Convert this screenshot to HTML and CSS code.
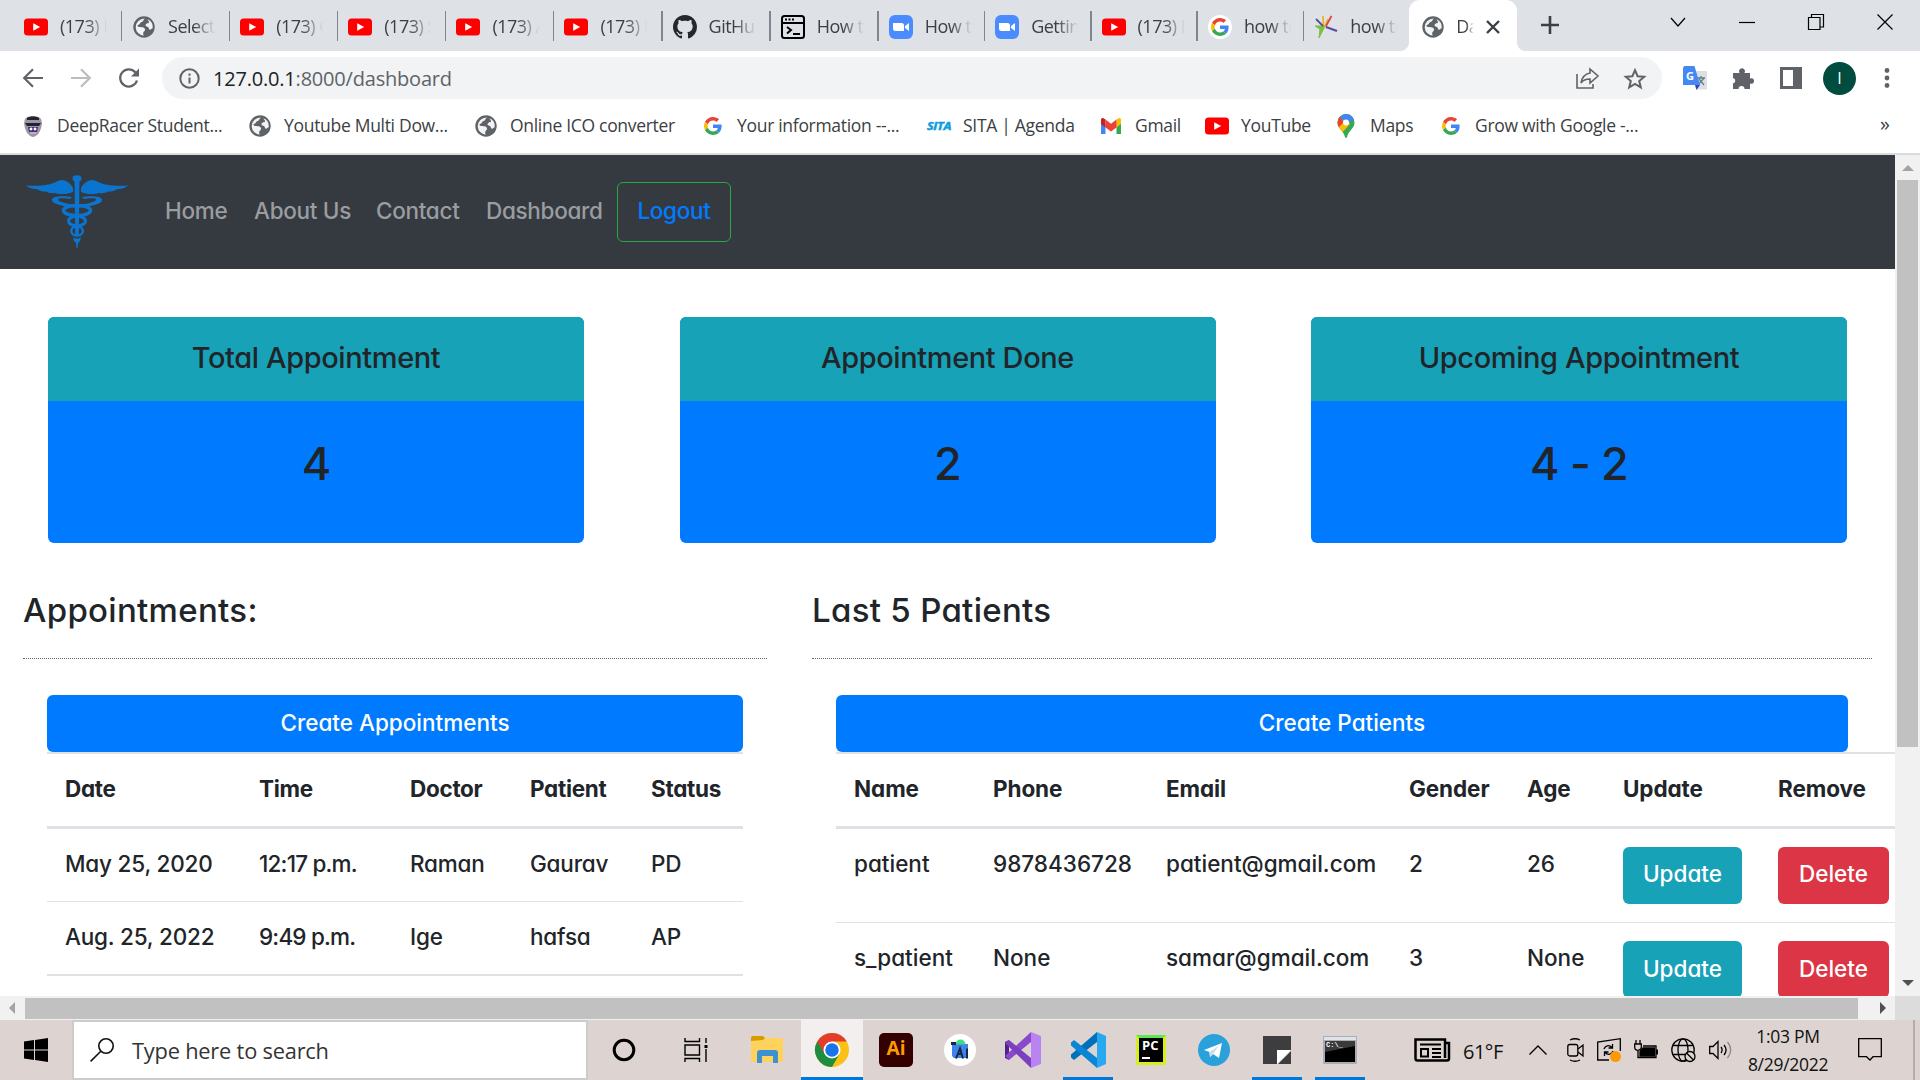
FILE: index.html
```html
<!DOCTYPE html>
<html lang="en">
<head>
<meta charset="utf-8">
<title>Dashboard</title>
<link rel="stylesheet" href="styles.css">
</head>
<body>
<svg class="defs" aria-hidden="true">
  <symbol id="yt" viewBox="0 0 24 24"><rect y="3.6" width="24" height="16.8" rx="3.5" fill="#f00"/><path d="M9.2 8.2v7.6l7-3.8z" fill="#fff"/></symbol>
  <symbol id="globe" viewBox="0 0 24 24"><circle cx="12" cy="12" r="10.7" fill="#5f6368"/><path d="M12.8 3.6c-2 1.6-1.2 3-3.2 3.4-1.8.4-1.4 2.3-2.6 2.6-1.8.3-2 1.8-.7 2.1 2.7.5 6.3.2 6.700 2.500.4 2-1.700 2-1.800 3.900-.1 1 .2 1.900.4 2.600a8.700 8.700 0 0 1-7.900-8.200 8.800 8.800 0 0 1 9.100-8.900zM15.500 4.300a8.700 8.700 0 0 1 5.200 8.900c-1.100-.1-1.500 1.700-2.700 1.600-1.400-.1-.9-2.800-2.700-3-1.700-.2-2.400-1.500-1.200-2.700 1.200-1.100 2.700-.3 2.900-1.900.1-1.400-1.400-1.600-1.500-2.900z" fill="#f1f3f4"/></symbol>
  <symbol id="g" viewBox="0 0 48 48"><path fill="#EA4335" d="M24 9.500c3.540 0 6.710 1.220 9.210 3.600l6.850-6.850C35.900 2.380 30.470 0 24 0 14.620 0 6.510 5.380 2.560 13.220l7.980 6.190C12.430 13.720 17.740 9.500 24 9.500z"/><path fill="#4285F4" d="M46.980 24.550c0-1.570-.15-3.090-.38-4.550H24v9.020h12.940c-.58 2.960-2.260 5.480-4.780 7.180l7.730 6c4.510-4.180 7.090-10.360 7.090-17.650z"/><path fill="#FBBC05" d="M10.530 28.590c-.48-1.450-.76-2.990-.76-4.590s.27-3.140.76-4.590l-7.980-6.190C.92 16.460 0 20.120 0 24c0 3.880.92 7.540 2.560 10.780l7.970-6.190z"/><path fill="#34A853" d="M24 48c6.480 0 11.930-2.130 15.890-5.810l-7.730-6c-2.150 1.450-4.920 2.300-8.160 2.300-6.260 0-11.570-4.220-13.470-9.910l-7.980 6.190C6.510 42.620 14.620 48 24 48z"/></symbol>
  <symbol id="zoomus" viewBox="0 0 24 24"><rect width="24" height="24" rx="6" fill="#4a8cff"/><path d="M4 8h8.500a2.500 2.500 0 0 1 2.500 2.500V16H6.500A2.500 2.500 0 0 1 4 13.500zM16 11l4-3v8l-4-3z" fill="#fff"/></symbol>
</svg>

<div class="tabs">
  <div class="tab"><svg><use href="#yt"/></svg><span>(173) H</span></div>
  <div class="tab"><svg><use href="#globe"/></svg><span>Select</span></div>
  <div class="tab"><svg><use href="#yt"/></svg><span>(173) C</span></div>
  <div class="tab"><svg><use href="#yt"/></svg><span>(173) S</span></div>
  <div class="tab"><svg><use href="#yt"/></svg><span>(173) A</span></div>
  <div class="tab"><svg><use href="#yt"/></svg><span>(173) I</span></div>
  <div class="tab"><svg viewBox="0 0 16 16"><path fill="#24292f" d="M8 0C3.580 0 0 3.580 0 8c0 3.540 2.290 6.530 5.470 7.590.4.070.55-.17.55-.38 0-.19-.01-.82-.01-1.490-2.010.37-2.530-.49-2.690-.94-.09-.23-.48-.94-.82-1.130-.28-.15-.68-.52-.01-.53.63-.01 1.080.58 1.230.82.72 1.210 1.870.87 2.330.66.070-.52.28-.87.51-1.070-1.780-.2-3.640-.89-3.640-3.950 0-.87.31-1.590.82-2.150-.08-.2-.36-1.020.08-2.120 0 0 .67-.21 2.200.82.64-.18 1.320-.27 2-.27s1.360.09 2 .27c1.530-1.040 2.200-.82 2.200-.82.44 1.100.16 1.920.08 2.120.51.56.82 1.270.82 2.150 0 3.070-1.870 3.750-3.650 3.950.29.25.54.73.54 1.480 0 1.070-.01 1.930-.01 2.200 0 .21.15.46.55.38A8.010 8.010 0 0 0 16 8c0-4.420-3.580-8-8-8z"/></svg><span>GitHub</span></div>
  <div class="tab"><svg viewBox="0 0 24 24" fill="none" stroke="#000" stroke-width="2"><rect x="1" y="1" width="22" height="22" rx="2.500"/><path d="M1 8h22M6 12l4 3-4 3.500M12 19h7"/><path d="M4 4.600h10" stroke-dasharray="2 1.500"/></svg><span>How t</span></div>
  <div class="tab"><svg><use href="#zoomus"/></svg><span>How t</span></div>
  <div class="tab"><svg><use href="#zoomus"/></svg><span>Getting</span></div>
  <div class="tab"><svg><use href="#yt"/></svg><span>(173) H</span></div>
  <div class="tab"><svg viewBox="0 0 24 24"><circle cx="12" cy="12" r="12" fill="#fff"/><use href="#g" x="3" y="3" width="18" height="18"/></svg><span>how to</span></div>
  <div class="tab last"><svg viewBox="0 0 24 24" fill="none" stroke-width="1.800"><path d="M11 12l3-8" stroke="#e9b52c"/><path d="M9.500 11L9 1" stroke="#e9b52c"/><path d="M12 11l5.500-10" stroke="#e5423c"/><path d="M1 11l10 0-6 12 1-9z" fill="#7ac143" stroke="#7ac143" stroke-width="1"/><path d="M12 12l11 4" stroke="#5c4a9c" stroke-width="2.200"/><path d="M2 4l7 7" stroke="#5c4a9c"/></svg><span>how to</span></div>
  <div class="tab active"><svg><use href="#globe"/></svg><span>Dash</span><svg class="close" viewBox="0 0 14 14"><path d="M1 1l12 12M13 1L1 13" stroke="#3c4043" stroke-width="2.400"/></svg></div>
  <svg class="plus" viewBox="0 0 18 18"><path d="M9 0v18M0 9h18" stroke="#3c4043" stroke-width="2.600"/></svg>
  <div class="wincontrols">
    <svg width="16" height="10" viewBox="0 0 16 10"><path d="M1 1l7 8 7-8"/></svg>
    <svg width="16" height="16" viewBox="0 0 16 16"><path d="M0 8.500h16"/></svg>
    <svg width="16" height="16" viewBox="0 0 16 16"><path d="M.5 3.500h11.500v12H.5zM3.500 3V.5h12V13H12"/></svg>
    <svg width="16" height="16" viewBox="0 0 16 16"><path d="M.5.5l15 15M15.500.5l-15 15"/></svg>
  </div>
</div>

<div class="toolbar">
  <div class="navbtns">
    <svg viewBox="0 0 20 20"><path d="M20 10H1.500M10 1.200L1.200 10l8.800 8.800" stroke="#5f6368"/></svg>
    <svg viewBox="0 0 20 20"><path d="M0 10h18.500M10 1.200l8.800 8.800-8.800 8.800" stroke="#bbbdc0"/></svg>
    <svg viewBox="0 0 20 20"><path d="M18 12.500A8.600 8.600 0 1 1 16.500 4.500" stroke="#5f6368"/><path d="M20 .5v8h-8z" fill="#5f6368"/></svg>
  </div>
  <div class="omnibox">
    <svg width="21" height="21" viewBox="0 0 21 21" fill="none" stroke="#5f6368" stroke-width="2"><circle cx="10.500" cy="10.500" r="9.200"/><path d="M10.500 9.500v6M10.500 5.500v2.200"/></svg>
    <span class="url">127.0.0.1<em>:8000/dashboard</em></span>
    <svg class="share" viewBox="0 0 23 21" fill="none" stroke="#5f6368" stroke-width="1.600"><path d="M1 6v14h16v-4M14 1l8 7-8 7v-4c-4 0-7 1-9 4 1-6 4-9 9-10z"/></svg>
    <svg class="star" viewBox="0 0 22 21" fill="none" stroke="#5f6368" stroke-width="2"><path d="M11 2.200l2.600 6 6.600.5-5 4.300 1.600 6.300-5.800-3.500-5.800 3.500 1.600-6.300-5-4.300 6.600-.5z"/></svg>
  </div>
  <div class="exts">
    <svg class="e1" viewBox="0 0 24 24"><path d="M9 5h15v18.500H13z" fill="#dcdfe3"/><path d="M14 12h8M18 10v2M15 19l6-7M16 13l5 6" stroke="#607d8b" stroke-width="1.300" fill="none"/><path d="M1.500 0h10L17 19H0V1.500z" fill="#4688f1"/><path d="M12 19h5l-3.500 5z" fill="#3442b0"/><text x="3" y="14" class="gt">G</text></svg>
    <svg class="e2" viewBox="0 0 21 21"><path d="M0 5h6.500a3 3 0 1 1 5 0H17v5.500a2.800 2.800 0 1 1 0 5V21h-5.500a3 3 0 0 0-6 0H0v-5.500a2.800 2.800 0 0 0 0-5.500z" fill="#5f6368"/></svg>
    <svg class="e3" viewBox="0 0 22 22"><path d="M0 0h22v22H0zM3 3v16h10V3z" fill="#5f6368" fill-rule="evenodd"/></svg>
    <span class="avatar">I</span>
    <svg class="e4" viewBox="0 0 6 20"><g fill="#5f6368"><circle cx="3" cy="2.500" r="2.400"/><circle cx="3" cy="10" r="2.400"/><circle cx="3" cy="17.500" r="2.400"/></g></svg>
  </div>
</div>

<div class="bookmarks">
  <div><svg viewBox="0 0 24 24"><path d="M4 5c2-4 14-4 16 0l1 4c-1 8-4 13-9 14C7 22 4 17 3 9z" fill="#9a96a5"/><path d="M6 4c3-2 9-2 12 0v2H6zM4 9h16l-2 3H6z" fill="#25222c"/><path d="M7 13h10l-1 5H8z" fill="#4b2a86"/><path d="M9 14h2v2H9zM13 14h2v2h-2zM9 19h6" fill="#fff" stroke="#fff" stroke-width=".6"/></svg><span>DeepRacer Student...</span></div>
  <div><svg><use href="#globe"/></svg><span>Youtube Multi Dow...</span></div>
  <div><svg><use href="#globe"/></svg><span>Online ICO converter</span></div>
  <div><svg><use href="#g" x="3" y="3" width="18" height="18"/></svg><span>Your information --...</span></div>
  <div><svg viewBox="0 0 24 24"><text x="0" y="16" class="sita" textLength="24" lengthAdjust="spacingAndGlyphs">SITA</text></svg><span>SITA | Agenda</span></div>
  <div><svg viewBox="0 0 24 24"><path d="M2 6v14h4.500V10z" fill="#4285f4"/><path d="M22 6v14h-4.500V10z" fill="#34a853"/><path d="M17.500 5.500l2-1.300C21 3.500 22 4.500 22 6v4l-4.500 3.500z" fill="#fbbc04"/><path d="M6.500 5.500l-2-1.300C3 3.500 2 4.500 2 6v4l4.500 3.500z" fill="#c5221f"/><path d="M6.500 5.500L12 9.700l5.500-4.200v8L12 17.500l-5.500-4z" fill="#ea4335"/></svg><span>Gmail</span></div>
  <div><svg><use href="#yt"/></svg><span>YouTube</span></div>
  <div><svg viewBox="0 0 24 24"><clipPath id="pin"><path d="M12 0a8.500 8.500 0 0 1 8.500 8.500c0 6-6 8-7.500 14.500-.3 1.300-1.700 1.300-2 0C9.500 16.500 3.500 14.500 3.500 8.500A8.500 8.500 0 0 1 12 0z"/></clipPath><g clip-path="url(#pin)"><path d="M0 0h24v24H0z" fill="#34a853"/><path d="M0 14L12 2l4 8-9 10H0z" fill="#fbbc04"/><path d="M0 0l6 3 4 5-6 6H0z" fill="#ea4335"/><path d="M6 3l4-3h10l1 5-8 5z" fill="#4285f4"/></g><circle cx="12" cy="8.500" r="3" fill="#fff"/></svg><span>Maps</span></div>
  <div><svg><use href="#g" x="3" y="3" width="18" height="18"/></svg><span>Grow with Google -...</span></div>
  <div class="more">»</div>
</div>

<div class="viewport">
  <div class="page">
    <nav class="navbar">
      <svg class="logo" viewBox="0 0 102 74" fill="#0a74cf"><ellipse cx="51" cy="3.500" rx="4.500" ry="3.300"/><path d="M48.500 4h5l-.7 57h-3.600z"/><path d="M47 13C43 6 37 3.500 32 6 23 11 12 11 0 10.500c3 3 8 3.500 12 4 1 1.500 4 2 8 2 2 1.500 5 2 9 1.500 5 2 14 1 18-1zM55 13C59 6 65 3.500 70 6c9 5 20 5 32 4.500-3 3-8 3.500-12 4-1 1.500-4 2-8 2-2 1.500-5 2-9 1.500-5 2-14 1-18-1z"/><path d="M46 22c-6-1-20-2-20 3 0 4 10 6 25 8v-3c-10-1-19-3-19-5.500 0-2 9-1 12-.5zM56 22c6-1 20-2 20 3 0 4-10 6-25 8v-3c10-1 19-3 19-5.500 0-2-9-1-12-.5z"/><g fill="none" stroke="#0a74cf"><ellipse cx="51" cy="35.500" rx="13.500" ry="5" stroke-width="3.500"/><ellipse cx="51" cy="46" rx="8.500" ry="4.700" stroke-width="3"/><ellipse cx="51" cy="56" rx="5.800" ry="4.500" stroke-width="2.500"/></g><path d="M47 62c2 2 6 2 8 0l-1 4-2 2-.5 5h-1l-.5-5-2-2z"/></svg>
      <a>Home</a><a>About Us</a><a>Contact</a><a>Dashboard</a><button>Logout</button>
    </nav>
    <section class="cards">
      <div class="card"><h4>Total Appointment</h4><p>4</p></div>
      <div class="card"><h4>Appointment Done</h4><p>2</p></div>
      <div class="card"><h4>Upcoming Appointment</h4><p>4 - 2</p></div>
    </section>
    <section class="lists">
      <div class="col">
        <h3>Appointments:</h3>
        <div class="panel">
          <a class="create">Create Appointments</a>
          <div class="table appts">
            <div class="row head"><span>Date</span><span>Time</span><span>Doctor</span><span>Patient</span><span>Status</span></div>
            <div class="row"><span>May 25, 2020</span><span class="time">12:17 p.m.</span><span>Raman</span><span>Gaurav</span><span>PD</span></div>
            <div class="row"><span>Aug. 25, 2022</span><span class="time">9:49 p.m.</span><span>Ige</span><span>hafsa</span><span>AP</span></div>
          </div>
        </div>
      </div>
      <div class="col">
        <h3>Last 5 Patients</h3>
        <div class="panel">
          <a class="create">Create Patients</a>
          <div class="table patients">
            <div class="row head"><span>Name</span><span>Phone</span><span>Email</span><span>Gender</span><span>Age</span><span>Update</span><span>Remove</span></div>
            <div class="row"><span>patient</span><span>9878436728</span><span>patient@gmail.com</span><span>2</span><span>26</span><a class="btn update">Update</a><a class="btn delete">Delete</a></div>
            <div class="row"><span>s_patient</span><span>None</span><span>samar@gmail.com</span><span>3</span><span>None</span><a class="btn update">Update</a><a class="btn delete">Delete</a></div>
          </div>
        </div>
      </div>
    </section>
  </div>
  <div class="vbar"><i class="up"></i><b></b><i class="down"></i></div>
  <div class="hbar"><i class="left"></i><b></b><i class="right"></i></div>
  <div class="corner"></div>
</div>

<div class="taskbar">
  <div class="start"><svg width="24" height="24" viewBox="0 0 24 24"><path d="M0 3.400l10-1.300v9.400H0zM11 2l13-2v11.500H11zM0 12.500h10v9.400L0 20.600zM11 12.500h13V24l-13-2z"/></svg></div>
  <div class="search"><svg width="24" height="24" viewBox="0 0 24 24" fill="none" stroke="#111" stroke-width="1.600"><circle cx="16" cy="8" r="7.200"/><path d="M10.800 13.200L.6 23.400"/></svg><span>Type here to search</span></div>
  <div class="app cortana"><svg width="24" height="24" viewBox="0 0 24 24"><circle cx="12" cy="12" r="9.800" fill="none" stroke="#000" stroke-width="3"/></svg></div>
  <div class="app tview"><svg width="24" height="24" viewBox="0 0 24 24" fill="none" stroke="#000" stroke-width="1.400"><path d="M1 0v3.500h14.500V0M1 24v-3.500h14.500V24M1 7h14.500v10H1zM22 0v5M22 11v13"/><path d="M20.500 7h3v3h-3z" fill="#000" stroke="none"/></svg></div>
  <div class="app files"><svg width="32" height="28" viewBox="0 0 32 28"><path d="M0 2a2 2 0 0 1 2-2h10l3 3-3 2H0z" fill="#d99a00"/><path d="M0 5l12-1 2-2h16a2 2 0 0 1 2 2v20a2 2 0 0 1-2 2H2a2 2 0 0 1-2-2z" fill="#ffd25e"/><path d="M6 27V17a3 3 0 0 1 3-3h15a3 3 0 0 1 3 3v10h-5v-7H11v7z" fill="#3c91d1"/></svg></div>
  <div class="app chrome on"><svg width="34" height="34" viewBox="0 0 48 48"><circle cx="24" cy="24" r="24" fill="#fbc116"/><path d="M24 24L3.200 12A24 24 0 0 0 24 48l10.400-18z" fill="#1e8e3e"/><path d="M3.200 12a24 24 0 0 1 41.600 0H24v12L14 30z" fill="#e33b2e"/><circle cx="24" cy="24" r="12" fill="#fff"/><circle cx="24" cy="24" r="9.500" fill="#1a73e8"/></svg></div>
  <div class="app ai"><span>Ai</span></div>
  <div class="app studio"><svg width="32" height="32" viewBox="0 0 32 32"><circle cx="16" cy="16" r="16" fill="#fff"/><path d="M8 10h16v14H10l-2-2z" fill="#3f82f0"/><path d="M11.500 10.500a5 5 0 0 1 10 0z" fill="#3ddc84"/><path d="M12 24.500l4-10 3 10M14 20h4M23 14.500v10" fill="none" stroke="#132a40" stroke-width="2"/><path d="M7 8h5v3H7z" fill="#132a40"/></svg></div>
  <div class="app vs"><svg width="36" height="36" viewBox="0 0 36 36"><path d="M0 10l4-2v20l-4-2z" fill="#52218a"/><path d="M4 28L26 10V0L0 24z" fill="#8a49cc"/><path d="M4 8l22 18v10L0 11z" fill="#7b3fc0"/><path d="M26 0l10 4v28l-10 4z" fill="#b983f2"/></svg></div>
  <div class="app code on"><svg width="36" height="36" viewBox="0 0 36 36"><path d="M1 25.500l3 2.500L27 10V0L1 22.500z" fill="#0070bb"/><path d="M1 10.500L4 8l23 18v10L1 13.500z" fill="#0b86d4"/><path d="M27 0l9 4v28l-9 4z" fill="#29a8f2"/></svg></div>
  <div class="app py"><span>PC</span></div>
  <div class="app tg"><svg width="32" height="32" viewBox="0 0 32 32"><circle cx="16" cy="16" r="16" fill="#2aa1da"/><path d="M6 16L24 9l-3 15-6-4-3 3-.5-5z" fill="#fff"/><path d="M11.500 18L21 11.500 15 20l-3 3z" fill="#c9dff0"/></svg></div>
  <div class="app note on"><svg width="28" height="28" viewBox="0 0 28 28"><path d="M0 0h28v14H14v14H0z" fill="#3d3d3f"/><path d="M14 14h14L14 28z" fill="#fff"/><path d="M28 15v13H15z" fill="#3d3d3f"/></svg></div>
  <div class="app cmd on"><svg width="34" height="28" viewBox="0 0 34 28"><rect width="34" height="28" rx="1" fill="#a9adb3"/><path d="M1 1h32v3H1z" fill="#dfe4ea"/><path d="M2 5h30v21H2z"/><path d="M2 5h30v5L2 16z" fill="#3a3a3a"/><text x="3" y="11" class="cm">C:\_</text></svg></div>
  <div class="news"><svg width="36" height="24" viewBox="0 0 36 24" fill="none" stroke="#000"><path d="M31 20V1.500H1.500v19a2 2 0 0 0 2 2H33a2 2 0 0 0 2-2V5h-4" stroke-width="2.500"/><path d="M6 6.500h21M18 11h9M18 15h9M18 19h9" stroke-width="1.800"/><path d="M7 11h7v7.500H7z" stroke-width="2"/></svg><span>61°F</span></div>
  <div class="tray">
    <svg width="18" height="10" viewBox="0 0 18 10"><path d="M.5 9.500L9 1l8.500 8.500"/></svg>
    <svg width="17" height="24" viewBox="0 0 17 24"><rect x=".8" y="6.500" width="10" height="11.500" rx="2"/><path d="M11 11l5-4v11l-5-4M3 2c3-1.500 7-1.500 10 0M3 22c3 1.500 7 1.500 10 0"/></svg>
    <svg width="24" height="24" viewBox="0 0 24 24"><path d="M12 22H.7V4L23.300.7V13"/><path d="M7 11c1-3.500 5-4.500 8-1.500M15.500 6v4h-4M16 13c-1 3.500-5 4.500-8 1.500M7.500 18v-4h4"/><circle cx="18.500" cy="18.500" r="5.500" fill="#f90" stroke="none"/></svg>
    <svg width="24" height="20" viewBox="0 0 24 20"><path d="M9 8h11.500v8H6v-4.500z" fill="#000"/><path d="M23.300 9.500v5M2 0v4M6 0v4M.7 4h6.600v3a3.300 3.300 0 0 1-6.600 0zM4 10v7.500h18V6H9" /></svg>
    <svg width="25" height="24" viewBox="0 0 25 24"><circle cx="12" cy="12" r="11.200"/><ellipse cx="12" cy="12" rx="5" ry="11.200"/><path d="M2 7.500h20M2 16.500h12"/><circle cx="19" cy="18.500" r="5" fill="#ddd4d2"/><path d="M15.500 15l7 7"/></svg>
    <svg width="23" height="20" viewBox="0 0 23 20"><path d="M.7 6.500H4L9 1.500v17L4 13.500H.7zM12 7c1.500 2 1.500 4 0 6M15 5c2.500 3 2.500 7 0 10"/><path d="M18.500 2c4 5 4 11 0 16" stroke="#888"/></svg>
  </div>
  <div class="clock"><span>1:03 PM</span><span>8/29/2022</span></div>
  <svg class="notif" width="24" height="24" viewBox="0 0 24 24" fill="none" stroke="#000" stroke-width="1.300"><path d="M.7.7h22.600v18H15L12 22l-3.500-3.300H.7z"/></svg>
  <i class="peek"></i>
</div>
</body>
</html>
```
FILE: styles.css
```css
* { box-sizing: border-box; }
body {
  margin: 0;
  width: 1920px;
  height: 1080px;
  overflow: hidden;
  display: flex;
  flex-direction: column;
  background: #fff;
  font-family: "Open Sans", "Noto Sans", sans-serif;
  color: #3c4043;
}
svg { display: block; flex: none; overflow: visible; }
.defs { position: absolute; width: 0; height: 0; }

/* Tab strip */
.tabs { flex: none; height: 51px; background: #dee1e6; display: flex; padding-left: 14px; }
.tab { width: 108.100px; flex: none; padding: 3px 0 0 10px; display: flex; align-items: center; gap: 12px; position: relative; }
.tab:nth-child(n+9) { width: 106.400px; }
.tab svg { width: 24px; height: 24px; }
.tab span {
  width: 47px; padding-bottom: 2px; overflow: hidden; white-space: nowrap; font-size: 18px; letter-spacing: -.5px;
  -webkit-mask-image: linear-gradient(90deg, #000 55%, transparent);
  mask-image: linear-gradient(90deg, #000 55%, transparent);
}
.tab::after { content: ""; position: absolute; right: 0; top: 11px; width: 1.500px; height: 30px; background: #80868b; }
.tab.last::after { display: none; }
.tab.active { width: 108px; margin-left: -2px; background: #fff; border-radius: 11px 11px 0 0; padding-left: 12px; gap: 11.500px; }
.tab.active::before, .tab.active::after { content: ""; position: absolute; top: auto; bottom: 0; width: 8px; height: 8px; }
.tab.active::before { left: -8px; background: radial-gradient(circle at 0 0, transparent 7.500px, #fff 8px); }
.tab.active::after { right: -8px; background: radial-gradient(circle at 100% 0, transparent 7.500px, #fff 8px); }
.tab.active span { width: 18px; }
.tab.active svg.close { width: 14px; height: 14px; }
.plus { width: 18px; height: 18px; margin: 16px 0 0 24px; }
.wincontrols { margin-left: auto; display: flex; gap: 53px; padding: 14px 27px 0 0; height: 29px; align-items: center; fill: none; stroke: #000; stroke-width: 1.200; }

/* Address bar */
.toolbar { flex: none; height: 53px; display: flex; align-items: center; padding-top: 1px; }
.navbtns { width: 162px; display: flex; gap: 28px; padding-left: 23px; fill: none; stroke-width: 2.200; }
.navbtns svg { width: 20px; height: 20px; }
.omnibox { width: 1500px; height: 42px; border-radius: 21px; background: #f1f3f4; display: flex; align-items: center; padding: 0 16px 0 17px; }
.url { margin-left: 13px; font-size: 20px; letter-spacing: -.2px; color: #202124; }
.url em { font-style: normal; color: #5f6368; }
.share { width: 23px; height: 21px; margin-left: auto; }
.star { width: 22px; height: 21px; margin-left: 25px; }
.exts { display: flex; align-items: center; }
.e1 { width: 24px; height: 24px; margin-left: 21px; }
.e2 { width: 21px; height: 21px; margin-left: 26px; }
.e3 { width: 22px; height: 22px; margin-left: 26px; }
.e4 { width: 6px; height: 20px; margin-left: 28px; }
.gt { font: bold 11px "Open Sans", sans-serif; fill: #fff; }
.avatar { width: 33px; height: 33px; margin-left: 21px; border-radius: 50%; background: #004d40; color: #fff; font-size: 16px; display: flex; align-items: center; justify-content: center; }

/* Bookmarks */
.bookmarks { flex: none; height: 51px; border-bottom: 2px solid #dadcdc; padding: 0 0 5px 21px; display: grid; grid-template-columns: 227px 226px 227px 226px 172px 106px 129px 105px 441px 30px; align-items: center; font-size: 17.500px; letter-spacing: -.3px; white-space: nowrap; }
.bookmarks > div { display: flex; align-items: center; gap: 12px; }
.bookmarks svg { width: 24px; height: 24px; }
.bookmarks span { padding-bottom: 2px; }
.sita { font: italic bold 11px "Open Sans", sans-serif; fill: #0d9ddb; stroke: #0d9ddb; stroke-width: .5; }
.more { font-size: 20px; padding-bottom: 5px; }

/* Browser viewport with its scrollbars */
.viewport { flex: none; height: 865px; display: grid; grid-template: 841px 24px / 1895px 25px; }
.page { overflow: hidden; font-family: Inter, "Open Sans", sans-serif; font-feature-settings: "cv11"; color: #212529; font-size: 22.500px; font-weight: 450; letter-spacing: -.2px; white-space: nowrap; }
.vbar, .hbar { background: #f1f1f1; display: flex; align-items: center; }
.vbar { flex-direction: column; }
.vbar b { width: 21px; height: 567px; background: #c1c1c1; }
.hbar b { width: 1833px; height: 21px; background: #c1c1c1; }
.corner { background: #dcdcdc; }
.up { margin: 10px 0 9px; border: 6px solid transparent; border-top: 0; border-bottom-color: #a3a3a3; }
.down { margin-top: auto; margin-bottom: 10px; border: 6px solid transparent; border-bottom: 0; border-top-color: #505050; }
.left { margin: 0 10px 0 9px; border: 6px solid transparent; border-left: 0; border-right-color: #a3a3a3; }
.right { margin-left: auto; margin-right: 9px; border: 6px solid transparent; border-right: 0; border-left-color: #505050; }

.navbar { height: 114px; background: #343a40; padding: 0 0 0 26px; display: grid; grid-template-columns: 139px 89px 122px 110px 131px 114px; align-items: center; font-weight: 550; letter-spacing: -.3px; color: #9a9da0; }
.navbar a { padding-bottom: 4px; }
.logo { width: 102px; height: 74px; }
.navbar button { height: 60px; border: 1px solid #28a745; border-radius: 6px; background: none; font: inherit; letter-spacing: inherit; font-feature-settings: inherit; color: #007bff; padding: 0 0 3px; }

.cards { height: 274px; padding: 48px 48px 0; display: grid; grid-template-columns: repeat(3, 536px); justify-content: space-between; }
.card { height: 226px; border-radius: 6px; overflow: hidden; background: #007bff; text-align: center; }
.card h4 { margin: 0; height: 84px; line-height: 81px; background: #17a2b8; font-weight: 450; font-size: 29px; letter-spacing: -.4px; }
.card p { margin: 0; line-height: 125px; font-size: 45px; font-weight: 550; letter-spacing: -.8px; }

.lists { display: grid; grid-template-columns: 744px 1060px; column-gap: 45px; padding-left: 23px; }
.col h3 { margin: 0; height: 116px; padding-top: 36px; border-bottom: 1px dotted #666; font-weight: 450; font-size: 33px; line-height: 63px; letter-spacing: .3px; }
.panel { padding: 36px 24px 0; }
.create { display: block; height: 57px; line-height: 56px; border-radius: 6px; background: #007bff; color: #fff; text-align: center; font-weight: 550; letter-spacing: 0; }
.row { display: grid; height: 73px; padding: 18px 0 0 18px; border-bottom: 1px solid #dee2e6; line-height: 33px; align-items: start; }
.appts .row { grid-template-columns: 194px 151px 120px 121px 80px; }
.row.head, .appts .row.head { height: 77px; padding-top: 18px; border-top: 2px solid #dee2e6; border-bottom-width: 3px; font-weight: 650; letter-spacing: -.3px; }
.appts .row:last-child { height: 74px; border-bottom-width: 2px; }
.time { letter-spacing: -.8px; }
.patients { width: 1090px; letter-spacing: 0; }
.patients .row { height: 94px; grid-template-columns: 139px 173px 243px 118px 96px 155px 111px; }
.patients .row.head { height: 77px; letter-spacing: -.1px; }
.btn { height: 57px; line-height: 54px; border-radius: 6px; color: #fff; text-align: center; font-weight: 550; }
.update { width: 119px; background: #17a2b8; }
.delete { width: 111px; background: #dc3545; }
.row:last-child .btn { line-height: 56px; }

/* Taskbar */
.taskbar { flex: none; height: 60px; background: #ddd4d2; display: flex; align-items: center; color: #111; }
.start { width: 72px; padding-left: 24px; }
.search { width: 516px; height: 60px; background: #fff; border: 2px solid #ccc; display: flex; align-items: center; gap: 18px; padding-left: 16px; font-size: 21.800px; letter-spacing: -.2px; color: #333; }
.app { height: 60px; display: flex; align-items: center; justify-content: center; width: 50px; margin-right: 13px; flex: none; }
.app.on { border-bottom: 3px solid #0078d7; padding-top: 3px; }
.cortana { width: 72px; margin-right: 0; }
.tview { width: 72px; margin-right: 0; }
.files { width: 69px; margin-right: 0; }
.chrome { width: 62px; background: #f2efee; margin-right: 8px; }
.ai { margin-right: 14px; }
.ai span { width: 34px; height: 34px; border-radius: 5px; background: #330000; color: #ff9a00; font: bold 19px/31px "Open Sans", sans-serif; text-align: center; }
.vs { margin-right: 15px; }
.py span { width: 30px; height: 30px; background: #000; border: 3px solid #d5ee1c; border-top-color: #5bea4e; color: #fff; font: bold 13px/15px "Open Sans", sans-serif; padding-left: 3px; }
.py span::after { content: ""; display: block; width: 8px; height: 2px; background: #fff; margin-top: 4px; }
.cm { font: bold 7px "Liberation Mono", monospace; fill: #fff; }
.news { display: flex; align-items: center; gap: 13px; margin-left: 36px; font-size: 20px; letter-spacing: -.5px; width: 115px; }
.news span { padding-top: 2px; }
.tray { display: flex; align-items: center; gap: 13px; width: 217px; fill: none; stroke: #000; stroke-width: 1.300; }
.tray svg:nth-child(2) { margin-left: 7px; }
.clock { width: 84px; display: flex; flex-direction: column; align-items: center; font-size: 17.500px; line-height: 28px; letter-spacing: -.3px; white-space: nowrap; }
.notif { margin-left: 28px; }
.peek { width: 2px; height: 60px; background: #b5adab; margin-left: 31px; }
```
